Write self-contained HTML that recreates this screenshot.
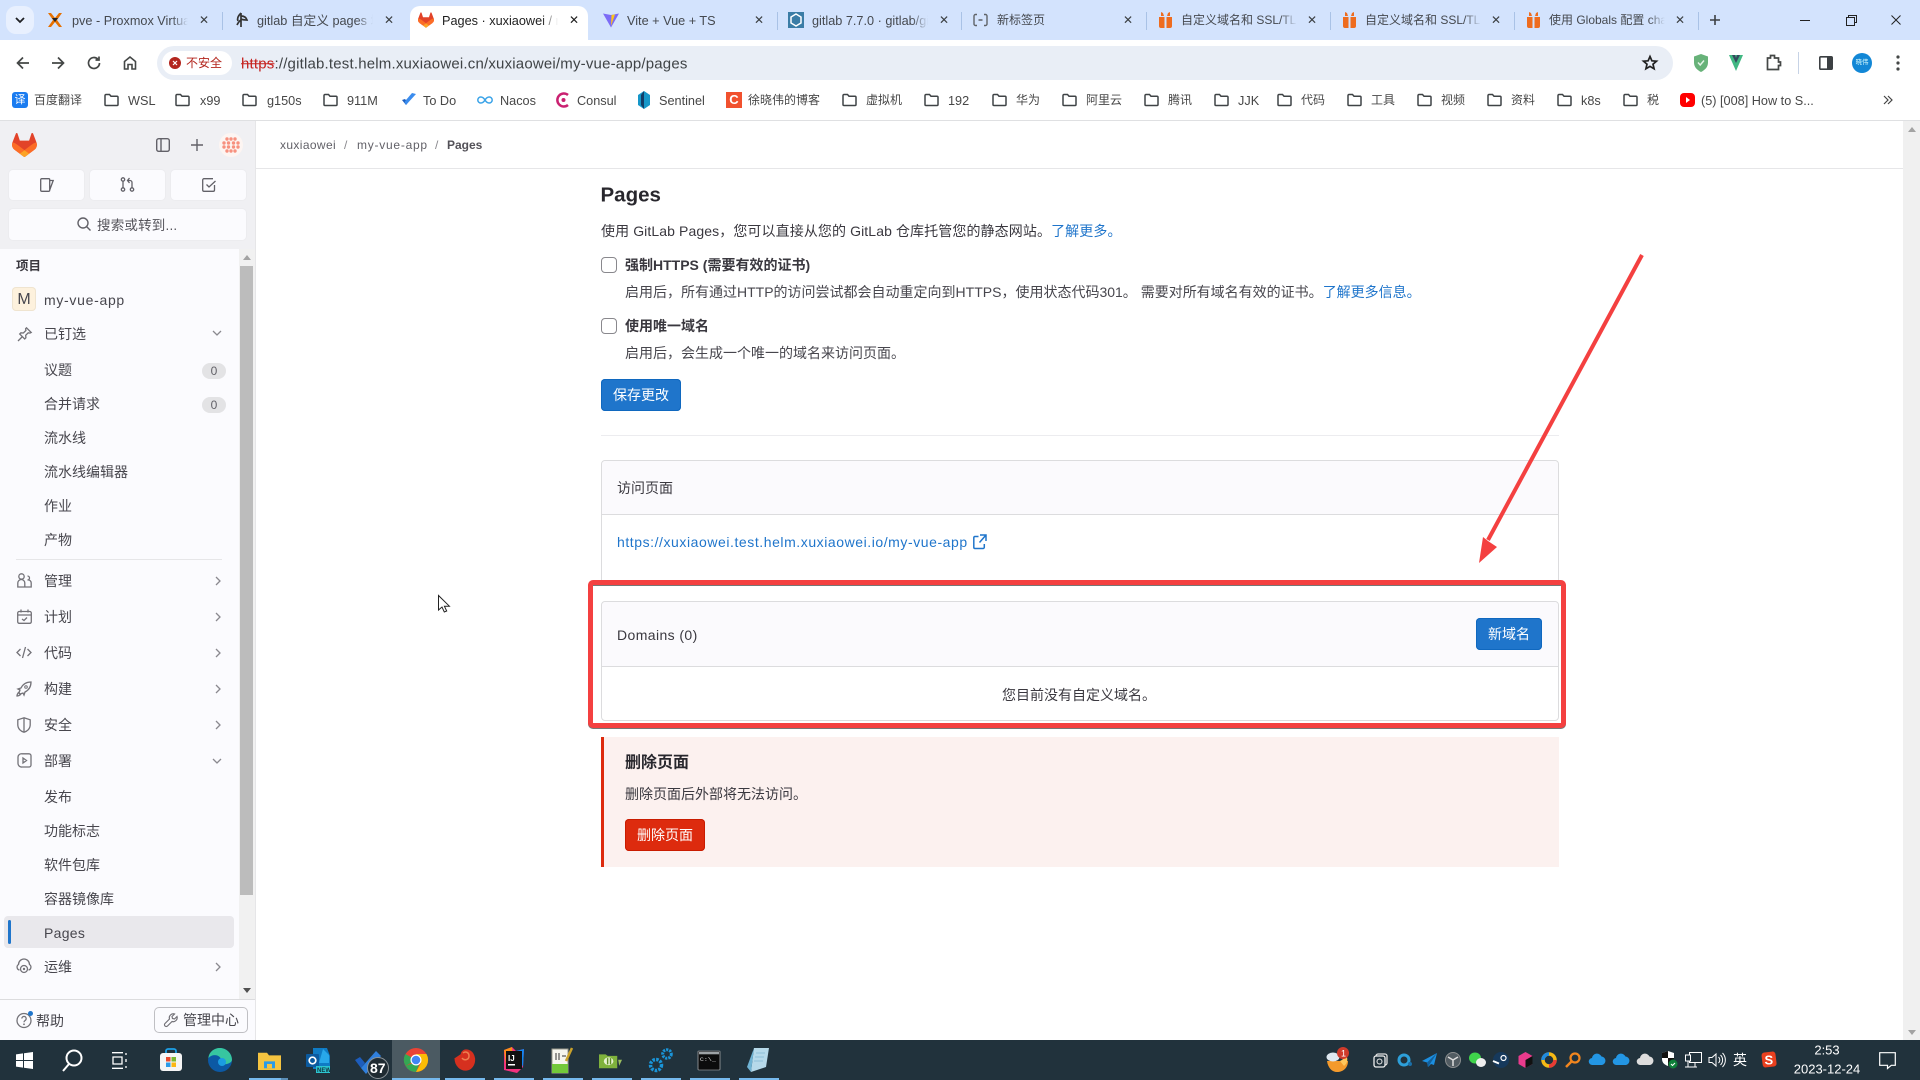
<!DOCTYPE html>
<html lang="zh"><head><meta charset="utf-8"><title>Pages · xuxiaowei</title>
<style>
*{box-sizing:border-box}
html,body{margin:0;padding:0;width:1920px;height:1080px;overflow:hidden;background:#fff;font-family:"Liberation Sans","Noto Sans CJK SC",sans-serif;color:#3a383f}
.a{position:absolute}
.t{position:absolute;white-space:nowrap;transform:translateY(-50%);line-height:1.3}
svg{position:absolute;overflow:visible}
.tab{font-size:12.7px;color:#45494f;width:116px;overflow:hidden;-webkit-mask-image:linear-gradient(to right,#000 86%,transparent);mask-image:linear-gradient(to right,#000 86%,transparent)}
.x{font-size:12px;color:#3c4043;font-family:"Liberation Sans",sans-serif}
.sep{position:absolute;top:12px;width:1px;height:18px;background:#a9c2e6}
.bm{font-size:12px;color:#474747}
.bl{font-size:12.7px;color:#474747}
.s{font-size:14px;color:#47464d}
.m{font-size:14px;color:#3a383f}
.btn{position:absolute;border-radius:4px;color:#fff;font-size:14px;text-align:center;line-height:33px}
a{color:#1f75cb;text-decoration:none}
.tb{position:absolute;left:0;top:1040px;width:1920px;height:40px;background:#21323c}
.u{position:absolute;top:1078px;height:2px;background:#76b9ed}
</style></head><body>

<!-- tab strip -->
<div class="a" style="left:0;top:0;width:1920px;height:40px;background:#d3e3fd"></div>
<div class="a" style="left:6px;top:6px;width:28px;height:28px;border-radius:10px;background:#e8f0fe"></div>
<svg style="left:14px;top:15px" width="12" height="10" viewBox="0 0 12 10"><path d="M2 3l4 4 4-4" fill="none" stroke="#202124" stroke-width="1.8"/></svg>
<div class="a" style="left:410px;top:6px;width:178px;height:36px;background:#fff;border-radius:10px 10px 0 0"></div>

<svg style="left:47px;top:12px" width="16" height="16" viewBox="0 0 16 16"><path d="M1 1h3l4 5 4-5h3l-5 7 5 7h-3l-4-5-4 5H1l5-7z" fill="#e57000"/><path d="M5 6l3 4 3-4" fill="#222"/></svg>
<span class="t tab" style="left:72px;top:21px">pve - Proxmox Virtual Environment</span><span class="t x" style="left:199px;top:21px">✕</span>
<div class="sep" style="left:222px"></div>
<svg style="left:235px;top:12px" width="14" height="16" viewBox="0 0 14 16"><path d="M6 1v14M6 1C3 4 2 7 3 9M6 4c3 0 5 1 6 4-2 0-4 0-6-1M6 8c-2 1-3 3-4 5" fill="none" stroke="#333" stroke-width="1.7"/></svg>
<span class="t tab" style="left:257px;top:21px">gitlab 自定义 pages 域名</span><span class="t x" style="left:384px;top:21px">✕</span>

<svg style="left:418px;top:12px" width="16" height="16" viewBox="0 0 25 24"><path d="m24.507 9.5-.034-.09L21.082.562a.896.896 0 0 0-1.694.091l-2.29 7.01H7.825L5.535.653a.898.898 0 0 0-1.694-.09L.451 9.411.416 9.5a6.297 6.297 0 0 0 2.09 7.278l.012.01.03.022 5.16 3.867 2.56 1.935 1.554 1.176a1.051 1.051 0 0 0 1.268 0l1.555-1.176 2.56-1.935 5.197-3.89.014-.01A6.297 6.297 0 0 0 24.507 9.5Z" fill="#E24329"/><path d="m24.507 9.5-.034-.09a11.44 11.44 0 0 0-4.56 2.051l-7.447 5.632 4.742 3.584 5.197-3.89.014-.01A6.297 6.297 0 0 0 24.507 9.5Z" fill="#FC6D26"/><path d="m7.707 20.677 2.56 1.935 1.555 1.176a1.051 1.051 0 0 0 1.268 0l1.555-1.176 2.56-1.935-4.743-3.584-4.755 3.584Z" fill="#FCA326"/><path d="M5.01 11.461a11.43 11.43 0 0 0-4.56-2.05L.416 9.5a6.297 6.297 0 0 0 2.09 7.278l.012.01.03.022 5.16 3.867 4.745-3.584-7.444-5.632Z" fill="#FC6D26"/></svg>
<span class="t tab" style="left:442px;top:21px;color:#1f1f1f">Pages · xuxiaowei / my-vue-app</span><span class="t x" style="left:569px;top:21px;color:#1f1f1f">✕</span>

<svg style="left:603px;top:12px" width="16" height="16" viewBox="0 0 16 16"><path d="M0 1.5L8 3l8-1.5L8 15.5z" fill="#7c6cf6"/><path d="M8.5 3l3.5-.6L8 14z" fill="#ffc517"/></svg>
<span class="t tab" style="left:627px;top:21px">Vite + Vue + TS</span><span class="t x" style="left:754px;top:21px">✕</span>
<div class="sep" style="left:777px"></div>
<svg style="left:788px;top:12px" width="16" height="16" viewBox="0 0 16 16"><rect width="16" height="16" fill="#3b7da6"/><path d="M8 2l5 3v6l-5 3-5-3V5z" fill="none" stroke="#fff" stroke-width="1.5"/></svg>
<span class="t tab" style="left:812px;top:21px">gitlab 7.7.0 · gitlab/gitlab</span><span class="t x" style="left:939px;top:21px">✕</span>
<div class="sep" style="left:961px"></div>
<svg style="left:973px;top:13px" width="15" height="14" viewBox="0 0 15 14"><path d="M4 1.5H2.5a1.5 1.5 0 0 0-1.5 1.5v8a1.5 1.5 0 0 0 1.5 1.5H4M11 1.5h1.5a1.5 1.5 0 0 1 1.5 1.5v8a1.5 1.5 0 0 1-1.5 1.5H11M5.5 7h4" fill="none" stroke="#5f6368" stroke-width="1.4"/></svg>
<span class="t tab" style="left:997px;top:21px;font-size:12px">新标签页</span><span class="t x" style="left:1123px;top:21px">✕</span>
<div class="sep" style="left:1146px"></div>
<svg style="left:1158px;top:12px" width="15" height="16" viewBox="0 0 15 16"><path d="M1 5h5.5v11H3a2 2 0 0 1-2-2zM8.5 5H14v9a2 2 0 0 1-2 2H8.5zM3 0l2 1 1 3H3zM12 0l-2 1-1 3h3z" fill="#ee6c1f"/></svg>
<span class="t tab" style="left:1181px;top:21px;font-size:12px">自定义域名和 SSL/TLS 证书</span><span class="t x" style="left:1307px;top:21px">✕</span>
<div class="sep" style="left:1330px"></div>
<svg style="left:1342px;top:12px" width="15" height="16" viewBox="0 0 15 16"><path d="M1 5h5.5v11H3a2 2 0 0 1-2-2zM8.5 5H14v9a2 2 0 0 1-2 2H8.5zM3 0l2 1 1 3H3zM12 0l-2 1-1 3h3z" fill="#ee6c1f"/></svg>
<span class="t tab" style="left:1365px;top:21px;font-size:12px">自定义域名和 SSL/TLS 证书</span><span class="t x" style="left:1491px;top:21px">✕</span>
<div class="sep" style="left:1514px"></div>
<svg style="left:1526px;top:12px" width="15" height="16" viewBox="0 0 15 16"><path d="M1 5h5.5v11H3a2 2 0 0 1-2-2zM8.5 5H14v9a2 2 0 0 1-2 2H8.5zM3 0l2 1 1 3H3zM12 0l-2 1-1 3h3z" fill="#ee6c1f"/></svg>
<span class="t tab" style="left:1549px;top:21px;font-size:12px">使用 Globals 配置 chart</span><span class="t x" style="left:1675px;top:21px">✕</span>
<div class="sep" style="left:1698px"></div>
<svg style="left:1709px;top:14px" width="12" height="12" viewBox="0 0 12 12"><path d="M6 1v10M1 6h10" stroke="#3c4043" stroke-width="1.6"/></svg>
<div class="a" style="left:1800px;top:20px;width:10px;height:1px;background:#222"></div>
<svg style="left:1846px;top:15px" width="11" height="11" viewBox="0 0 11 11"><path d="M2.5 2.5V.5h8v7h-2M.5 2.5h8v8h-8z" fill="none" stroke="#222"/></svg>
<svg style="left:1891px;top:15px" width="10" height="10" viewBox="0 0 10 10"><path d="M.5.5l9 9M9.5.5l-9 9" stroke="#222"/></svg>

<!-- toolbar -->
<div class="a" style="left:0;top:40px;width:1920px;height:41px;background:#fff;"></div>
<svg style="left:15px;top:55px" width="16" height="16" viewBox="0 0 16 16"><path d="M14 8H2.5M8 2.5L2.5 8 8 13.5" fill="none" stroke="#444746" stroke-width="1.7"/></svg>
<svg style="left:50px;top:55px" width="16" height="16" viewBox="0 0 16 16"><path d="M2 8h11.5M8 2.5L13.5 8 8 13.5" fill="none" stroke="#444746" stroke-width="1.7"/></svg>
<svg style="left:86px;top:55px" width="16" height="16" viewBox="0 0 16 16"><path d="M13.5 8A5.5 5.5 0 1 1 11.8 4M13 1.5V5H9.5" fill="none" stroke="#444746" stroke-width="1.7"/></svg>
<svg style="left:122px;top:55px" width="16" height="16" viewBox="0 0 16 16"><path d="M2.5 14V6.5L8 2l5.5 4.5V14H10V9.5H6V14z" fill="none" stroke="#444746" stroke-width="1.6"/></svg>
<div class="a" style="left:157px;top:46px;width:1516px;height:34px;border-radius:17px;background:#e9eef6"></div>
<div class="a" style="left:162px;top:51px;width:70px;height:24px;border-radius:12px;background:#fff"></div>
<svg style="left:169px;top:57px" width="12" height="12" viewBox="0 0 12 12"><circle cx="6" cy="6" r="6" fill="#b3261e"/><path d="M4 4l4 4M8 4l-4 4" stroke="#fff" stroke-width="1.2"/></svg>
<span class="t" style="left:186px;top:64px;font-size:12px;color:#b3261e">不安全</span>
<span class="t" style="left:241px;top:64px;font-size:15px;color:#1f1f1f;letter-spacing:.19px"><span style="color:#c5221f;text-decoration:line-through">https</span><span style="color:#3f4346">://gitlab.test.helm.xuxiaowei.cn/xuxiaowei/my-vue-app/pages</span></span>
<svg style="left:1642px;top:55px" width="16" height="16" viewBox="0 0 16 16"><path d="M8 1.5l1.900 4.300 4.600.4-3.500 3 1.100 4.600L8 11.400 3.900 13.800 5 9.200l-3.500-3 4.600-.4z" fill="none" stroke="#222" stroke-width="1.7"/></svg>
<svg style="left:1693px;top:54px" width="16" height="18" viewBox="0 0 16 18"><path d="M8 0l7 2.5v6C15 13 12 16 8 18 4 16 1 13 1 8.5v-6z" fill="#67b279"/><path d="M5 8.5l2.200 2.500L11 6.500" fill="none" stroke="#e6f5e9" stroke-width="1.4"/></svg>
<svg style="left:1729px;top:55px" width="14" height="16" viewBox="0 0 14 16"><path d="M0 0h14L7 16z" fill="#41b883"/><path d="M3 0h3l1 3 1-3h3L7 8z" fill="#35495e"/></svg>
<svg style="left:1766px;top:54px" width="15" height="17" viewBox="0 0 15 17"><path d="M1.5 4h3V1.500h4V4h4v4h2v3.500h-2V15.500h-11z" fill="none" stroke="#444746" stroke-width="1.7"/></svg>
<div class="a" style="left:1798px;top:52px;width:1px;height:22px;background:#c7d3e6"></div>
<svg style="left:1819px;top:56px" width="14" height="14" viewBox="0 0 14 14"><rect x=".8" y=".8" width="12.4" height="12.4" rx="1" fill="#fff" stroke="#3c4043" stroke-width="1.6"/><rect x="8" y="1" width="5" height="12" fill="#3c4043"/></svg>
<div class="a" style="left:1852px;top:53px;width:20px;height:20px;border-radius:50%;background:#1287d6;color:#dff;font-size:6.5px;line-height:20px;text-align:center">晓伟</div>
<svg style="left:1896px;top:55px" width="4" height="16" viewBox="0 0 4 16"><circle cx="2" cy="2" r="1.6" fill="#444746"/><circle cx="2" cy="8" r="1.6" fill="#444746"/><circle cx="2" cy="14" r="1.6" fill="#444746"/></svg>

<!-- bookmarks -->
<svg style="left:0;top:0;width:0;height:0"><defs><g id="f"><path d="M1 3.5a1 1 0 0 1 1-1h3.500l1.500 1.700h6a1 1 0 0 1 1 1V12.500a1 1 0 0 1-1 1H2a1 1 0 0 1-1-1z" fill="none" stroke="#3f4346" stroke-width="1.5"/></g></defs></svg>
<div class="a" style="left:12px;top:92px;width:16px;height:16px;border-radius:3px;background:#1b7cf0;color:#fff;font-size:11px;line-height:16px;text-align:center">译</div>
<span class="t bm" style="left:34px;top:101px">百度翻译</span>
<svg style="left:104px;top:92px" width="16" height="16"><use href="#f"/></svg><span class="t bl" style="left:128px;top:101px">WSL</span>
<svg style="left:175px;top:92px" width="16" height="16"><use href="#f"/></svg><span class="t bl" style="left:200px;top:101px">x99</span>
<svg style="left:242px;top:92px" width="16" height="16"><use href="#f"/></svg><span class="t bl" style="left:267px;top:101px">g150s</span>
<svg style="left:323px;top:92px" width="16" height="16"><use href="#f"/></svg><span class="t bl" style="left:347px;top:101px">911M</span>
<svg style="left:401px;top:92px" width="16" height="16" viewBox="0 0 16 16"><path d="M1 8l4 5 2-2.500L4 7z" fill="#1d5dbd"/><path d="M5 13L15 2l-4-1-6 7-1.500 2z" fill="#3a8cee"/></svg><span class="t bl" style="left:423px;top:101px">To Do</span>
<svg style="left:477px;top:94px" width="16" height="12" viewBox="0 0 16 12"><path d="M8 6C6.500 3.500 5 3 3.800 3a3 3 0 0 0 0 6C5 9 6.500 8.500 8 6c1.500-2.500 3-3 4.200-3a3 3 0 0 1 0 6C11 9 9.500 8.500 8 6z" fill="none" stroke="#3aa3e8" stroke-width="1.5"/></svg><span class="t bl" style="left:500px;top:101px">Nacos</span>
<svg style="left:556px;top:92px" width="15" height="16" viewBox="0 0 15 16"><path d="M12 3a6.500 6.500 0 1 0 0 10" fill="none" stroke="#ca2171" stroke-width="2.5"/><circle cx="7.5" cy="8" r="2" fill="#ca2171"/></svg><span class="t bl" style="left:577px;top:101px">Consul</span>
<svg style="left:637px;top:91px" width="14" height="18" viewBox="0 0 14 18"><path d="M7 0l6 4v10l-6 4-6-4V4z" fill="#1597c9"/><path d="M7 0v18L4 14V4z" fill="#103d68"/></svg><span class="t bl" style="left:659px;top:101px">Sentinel</span>
<div class="a" style="left:726px;top:92px;width:16px;height:16px;background:#f1512e;color:#fff;font-size:13px;line-height:16px;text-align:center;font-weight:bold">C</div><span class="t bm" style="left:748px;top:101px">徐晓伟的博客</span>
<svg style="left:842px;top:92px" width="16" height="16"><use href="#f"/></svg><span class="t bm" style="left:866px;top:101px">虚拟机</span>
<svg style="left:924px;top:92px" width="16" height="16"><use href="#f"/></svg><span class="t bl" style="left:948px;top:101px">192</span>
<svg style="left:992px;top:92px" width="16" height="16"><use href="#f"/></svg><span class="t bm" style="left:1016px;top:101px">华为</span>
<svg style="left:1062px;top:92px" width="16" height="16"><use href="#f"/></svg><span class="t bm" style="left:1086px;top:101px">阿里云</span>
<svg style="left:1144px;top:92px" width="16" height="16"><use href="#f"/></svg><span class="t bm" style="left:1168px;top:101px">腾讯</span>
<svg style="left:1214px;top:92px" width="16" height="16"><use href="#f"/></svg><span class="t bl" style="left:1238px;top:101px">JJK</span>
<svg style="left:1277px;top:92px" width="16" height="16"><use href="#f"/></svg><span class="t bm" style="left:1301px;top:101px">代码</span>
<svg style="left:1347px;top:92px" width="16" height="16"><use href="#f"/></svg><span class="t bm" style="left:1371px;top:101px">工具</span>
<svg style="left:1417px;top:92px" width="16" height="16"><use href="#f"/></svg><span class="t bm" style="left:1441px;top:101px">视频</span>
<svg style="left:1487px;top:92px" width="16" height="16"><use href="#f"/></svg><span class="t bm" style="left:1511px;top:101px">资料</span>
<svg style="left:1557px;top:92px" width="16" height="16"><use href="#f"/></svg><span class="t bl" style="left:1581px;top:101px">k8s</span>
<svg style="left:1623px;top:92px" width="16" height="16"><use href="#f"/></svg><span class="t bm" style="left:1647px;top:101px">税</span>
<svg style="left:1680px;top:93px" width="15" height="14" viewBox="0 0 15 14"><rect width="15" height="14" rx="4" fill="#f00"/><path d="M6 4l4 3-4 3z" fill="#fff"/></svg><span class="t bl" style="left:1701px;top:101px">(5) [008] How to S...</span>
<svg style="left:1883px;top:95px" width="10" height="10" viewBox="0 0 10 10"><path d="M1 1l4 4-4 4M5 1l4 4-4 4" fill="none" stroke="#444" stroke-width="1.2"/></svg>
<div class="a" style="left:0;top:120px;width:1920px;height:1px;background:#dfe0e2"></div>

<!-- sidebar -->
<div class="a" style="left:0;top:121px;width:255px;height:128px;background:#f0f0f3"></div>
<div class="a" style="left:0;top:249px;width:239px;height:750px;background:#fbfbfe"></div>
<div class="a" style="left:239px;top:249px;width:16px;height:750px;background:#f1f1f1"></div>
<div class="a" style="left:240px;top:266px;width:13px;height:629px;background:#bcbcbc"></div>
<svg style="left:242px;top:255px" width="10" height="6" viewBox="0 0 10 6"><path d="M5 0l4 5H1z" fill="#a3a3a3"/></svg>
<svg style="left:242px;top:987px" width="10" height="6" viewBox="0 0 10 6"><path d="M1 1h8L5 6z" fill="#505050"/></svg>
<div class="a" style="left:255px;top:121px;width:1px;height:919px;background:#e6e6e8"></div>
<div class="a" style="left:0;top:999px;width:255px;height:41px;background:#fbfbfe;border-top:1px solid #dcdcde"></div>

<svg style="left:12px;top:133px" width="25" height="24" viewBox="0 0 25 24"><path d="m24.507 9.5-.034-.09L21.082.562a.896.896 0 0 0-1.694.091l-2.29 7.01H7.825L5.535.653a.898.898 0 0 0-1.694-.09L.451 9.411.416 9.5a6.297 6.297 0 0 0 2.09 7.278l.012.01.03.022 5.16 3.867 2.56 1.935 1.554 1.176a1.051 1.051 0 0 0 1.268 0l1.555-1.176 2.56-1.935 5.197-3.89.014-.01A6.297 6.297 0 0 0 24.507 9.5Z" fill="#E24329"/><path d="m24.507 9.5-.034-.09a11.44 11.44 0 0 0-4.56 2.051l-7.447 5.632 4.742 3.584 5.197-3.89.014-.01A6.297 6.297 0 0 0 24.507 9.5Z" fill="#FC6D26"/><path d="m7.707 20.677 2.56 1.935 1.555 1.176a1.051 1.051 0 0 0 1.268 0l1.555-1.176 2.56-1.935-4.743-3.584-4.755 3.584Z" fill="#FCA326"/><path d="M5.01 11.461a11.43 11.43 0 0 0-4.56-2.05L.416 9.5a6.297 6.297 0 0 0 2.09 7.278l.012.01.03.022 5.16 3.867 4.745-3.584-7.444-5.632Z" fill="#FC6D26"/></svg>
<svg style="left:156px;top:138px" width="14" height="14" viewBox="0 0 14 14"><rect x=".7" y=".7" width="12.6" height="12.6" rx="2" fill="none" stroke="#626168" stroke-width="1.4"/><path d="M5 1v12" stroke="#626168" stroke-width="1.4"/></svg>
<svg style="left:191px;top:139px" width="12" height="12" viewBox="0 0 12 12"><path d="M6 0v12M0 6h12" stroke="#626168" stroke-width="1.4"/></svg>
<svg style="left:219px;top:133px" width="24" height="24" viewBox="0 0 24 24"><circle cx="12" cy="12" r="12" fill="#fdf5f2"/><g fill="#f7917f"><circle cx="8" cy="6" r="1.7"/><circle cx="12" cy="6" r="1.7"/><circle cx="16" cy="6" r="1.7"/><circle cx="5" cy="10" r="1.7"/><circle cx="9.5" cy="10" r="1.7"/><circle cx="14.5" cy="10" r="1.7"/><circle cx="19" cy="10" r="1.7"/><circle cx="5" cy="14" r="1.7"/><circle cx="9.5" cy="14" r="1.7"/><circle cx="14.5" cy="14" r="1.7"/><circle cx="19" cy="14" r="1.7"/><circle cx="8" cy="18" r="1.7"/><circle cx="12" cy="18" r="1.7"/><circle cx="16" cy="18" r="1.7"/></g></svg>
<div class="a" style="left:9px;top:170px;width:75px;height:30px;background:#fbfbfe;border-radius:4px;box-shadow:0 0 0 1px #ececef"></div>
<div class="a" style="left:90px;top:170px;width:75px;height:30px;background:#fbfbfe;border-radius:4px;box-shadow:0 0 0 1px #ececef"></div>
<div class="a" style="left:171px;top:170px;width:75px;height:30px;background:#fbfbfe;border-radius:4px;box-shadow:0 0 0 1px #ececef"></div>
<svg style="left:40px;top:178px" width="14" height="14" viewBox="0 0 14 14"><path d="M1.700.7h7a1 1 0 0 1 1 1v10.600a1 1 0 0 1-1 1h-7a1 1 0 0 1-1-1V1.700a1 1 0 0 1 1-1zM9.700 2.500h3.500L9.700 12" fill="none" stroke="#626168" stroke-width="1.3"/></svg>
<svg style="left:120px;top:177px" width="15" height="15" viewBox="0 0 15 15"><circle cx="3" cy="2.5" r="1.7" fill="none" stroke="#626168" stroke-width="1.3"/><circle cx="3" cy="12.5" r="1.7" fill="none" stroke="#626168" stroke-width="1.3"/><circle cx="12" cy="12.5" r="1.7" fill="none" stroke="#626168" stroke-width="1.3"/><path d="M3 4.500v6M12 10.500V5.500a2 2 0 0 0-2-2H8M9.500 1L7.500 3.500 9.500 6" fill="none" stroke="#626168" stroke-width="1.3"/></svg>
<svg style="left:202px;top:178px" width="15" height="14" viewBox="0 0 15 14"><path d="M12.500 7v5a1.300 1.300 0 0 1-1.300 1.300H2A1.300 1.300 0 0 1 .7 12V2A1.300 1.300 0 0 1 2 .7h9M4.500 6.500l2.500 2.500 6.500-6" fill="none" stroke="#626168" stroke-width="1.3"/></svg>
<div class="a" style="left:9px;top:209px;width:237px;height:31px;background:#fbfbfe;border-radius:4px;box-shadow:0 0 0 1px #ececef"></div>
<svg style="left:77px;top:217px" width="14" height="14" viewBox="0 0 14 14"><circle cx="6" cy="6" r="5" fill="none" stroke="#626168" stroke-width="1.4"/><path d="M9.500 9.500l4 4" stroke="#626168" stroke-width="1.4"/></svg>
<span class="t" style="left:97px;top:226px;font-size:13.5px;color:#55545b;letter-spacing:.2px">搜索或转到...</span>

<span class="t" style="left:16px;top:266px;font-size:12.5px;font-weight:bold;color:#3a383f">项目</span>
<div class="a" style="left:12px;top:287px;width:24px;height:24px;border-radius:4px;background:#fdf1dd;box-shadow:inset 0 0 0 1px #efe4d0;color:#47464d;font-size:16px;line-height:25px;text-align:center">M</div>
<span class="t s" style="left:44px;top:300px;letter-spacing:.7px">my-vue-app</span>
<svg style="left:17px;top:327px" width="15" height="15" viewBox="0 0 15 15"><path d="M9.500.8l4.700 4.700-1.200.6-1.800-.3-2.500 2.500.2 2.500-1.200 1.200-5-5L3.900 5.800l2.500.2L8.900 3.500 8.600 1.700zM5 10l-4 4" fill="none" stroke="#737278" stroke-width="1.3"/></svg>
<span class="t s" style="left:44px;top:334px">已钉选</span>
<span class="t s" style="left:44px;top:370px">议题</span>
<div class="a" style="left:202px;top:363px;width:24px;height:16px;border-radius:8px;background:#e3e3e5;color:#626168;font-size:12px;line-height:16px;text-align:center">0</div>
<span class="t s" style="left:44px;top:404px">合并请求</span>
<div class="a" style="left:202px;top:397px;width:24px;height:16px;border-radius:8px;background:#e3e3e5;color:#626168;font-size:12px;line-height:16px;text-align:center">0</div>
<span class="t s" style="left:44px;top:438px">流水线</span>
<span class="t s" style="left:44px;top:472px">流水线编辑器</span>
<span class="t s" style="left:44px;top:506px">作业</span>
<span class="t s" style="left:44px;top:540px">产物</span>
<div class="a" style="left:16px;top:559px;width:206px;height:1px;background:#e6e6e8"></div>
<svg style="left:17px;top:573px" width="15" height="15" viewBox="0 0 15 15"><circle cx="4.500" cy="3.500" r="2.700" fill="none" stroke="#737278" stroke-width="1.3"/><path d="M.8 14v-4a3.500 3.500 0 0 1 7 0v4zM10.500 7a2 2 0 1 0 0-4M10.500 7a3 3 0 0 1 3.700 3v4h-6" fill="none" stroke="#737278" stroke-width="1.3"/></svg>
<span class="t s" style="left:44px;top:581px">管理</span>
<svg style="left:17px;top:609px" width="15" height="15" viewBox="0 0 15 15"><rect x=".7" y="2.5" width="13.6" height="11.8" rx="1.5" fill="none" stroke="#737278" stroke-width="1.3"/><path d="M1 6h13M4 .5v3M11 .5v3M5 10l2 1.500L10 8.500" fill="none" stroke="#737278" stroke-width="1.3"/></svg>
<span class="t s" style="left:44px;top:617px">计划</span>
<svg style="left:16px;top:645px" width="16" height="15" viewBox="0 0 16 15"><path d="M4.500 4L1 7.500 4.500 11M11.500 4L15 7.500 11.500 11M9.500 2L6.500 13" fill="none" stroke="#737278" stroke-width="1.3"/></svg>
<span class="t s" style="left:44px;top:653px">代码</span>
<svg style="left:16px;top:681px" width="16" height="16" viewBox="0 0 16 16"><path d="M15 1c-5 0-8 2-10 6l-3 1 2 1-1 3 1 1 3-1 1 2 1-3c4-2 6-5 6-10zM3 11c-1 1-2 2-2 4 2 0 3-1 4-2" fill="none" stroke="#737278" stroke-width="1.3"/><circle cx="10" cy="6" r="1.3" fill="none" stroke="#737278"/></svg>
<span class="t s" style="left:44px;top:689px">构建</span>
<svg style="left:17px;top:717px" width="14" height="16" viewBox="0 0 14 16"><path d="M7 .8l6.200 2v5c0 4-3 6.500-6.200 7.400C3.800 14.300.8 11.800.8 7.800v-5zM7 .8v14.400" fill="none" stroke="#737278" stroke-width="1.3"/></svg>
<span class="t s" style="left:44px;top:725px">安全</span>
<svg style="left:17px;top:753px" width="15" height="15" viewBox="0 0 15 15"><path d="M5 .8h7a2 2 0 0 1 2 2V12a2 2 0 0 1-2 2H5a3.500 3.500 0 0 1-4-3.500V4A3.500 3.500 0 0 1 5 .8zM6 5l3.500 2.500L6 10z" fill="none" stroke="#737278" stroke-width="1.3"/></svg>
<span class="t s" style="left:44px;top:761px">部署</span>
<span class="t s" style="left:44px;top:797px">发布</span>
<span class="t s" style="left:44px;top:831px">功能标志</span>
<span class="t s" style="left:44px;top:865px">软件包库</span>
<span class="t s" style="left:44px;top:899px">容器镜像库</span>
<div class="a" style="left:4px;top:916px;width:230px;height:32px;border-radius:4px;background:#e9e8ec"></div>
<div class="a" style="left:8px;top:920px;width:3px;height:24px;border-radius:2px;background:#1f75cb"></div>
<span class="t s" style="left:44px;top:933px;letter-spacing:.3px">Pages</span>
<svg style="left:16px;top:959px" width="16" height="15" viewBox="0 0 16 15"><path d="M3.500 11A3 3 0 0 1 2.500 5.500 5.500 5.500 0 0 1 13.500 5.500 3 3 0 0 1 12.500 11" fill="none" stroke="#737278" stroke-width="1.3"/><circle cx="8" cy="10" r="3.500" fill="none" stroke="#737278" stroke-width="1.3"/><circle cx="8" cy="10" r="1.2" fill="#737278"/></svg>
<span class="t s" style="left:44px;top:967px">运维</span>
<svg style="left:212px;top:329px" width="10" height="8" viewBox="0 0 10 8"><path d="M1 2l4 4 4-4" fill="none" stroke="#8a898f" stroke-width="1.3"/></svg>
<svg style="left:212px;top:757px" width="10" height="8" viewBox="0 0 10 8"><path d="M1 2l4 4 4-4" fill="none" stroke="#8a898f" stroke-width="1.3"/></svg>
<svg style="left:214px;top:576px" width="8" height="10" viewBox="0 0 8 10"><path d="M2 1l4 4-4 4" fill="none" stroke="#8a898f" stroke-width="1.3"/></svg>
<svg style="left:214px;top:612px" width="8" height="10" viewBox="0 0 8 10"><path d="M2 1l4 4-4 4" fill="none" stroke="#8a898f" stroke-width="1.3"/></svg>
<svg style="left:214px;top:648px" width="8" height="10" viewBox="0 0 8 10"><path d="M2 1l4 4-4 4" fill="none" stroke="#8a898f" stroke-width="1.3"/></svg>
<svg style="left:214px;top:684px" width="8" height="10" viewBox="0 0 8 10"><path d="M2 1l4 4-4 4" fill="none" stroke="#8a898f" stroke-width="1.3"/></svg>
<svg style="left:214px;top:720px" width="8" height="10" viewBox="0 0 8 10"><path d="M2 1l4 4-4 4" fill="none" stroke="#8a898f" stroke-width="1.3"/></svg>
<svg style="left:214px;top:962px" width="8" height="10" viewBox="0 0 8 10"><path d="M2 1l4 4-4 4" fill="none" stroke="#8a898f" stroke-width="1.3"/></svg>
<svg style="left:16px;top:1012px" width="16" height="16" viewBox="0 0 16 16"><circle cx="8" cy="8.5" r="7" fill="none" stroke="#737278" stroke-width="1.3"/><path d="M5.800 6.500a2.200 2.200 0 1 1 3.300 2c-.8.500-1.100 1-1.100 1.800" fill="none" stroke="#737278" stroke-width="1.3"/><circle cx="8" cy="12.3" r=".9" fill="#737278"/></svg>
<div class="a" style="left:28px;top:1011px;width:5px;height:5px;border-radius:50%;background:#1f75cb"></div>
<span class="t s" style="left:36px;top:1021px;font-size:14px">帮助</span>
<div class="a" style="left:155px;top:1008px;width:92px;height:24px;border-radius:4px;background:#fbfbfe;box-shadow:0 0 0 1px #bfbfc3"></div>
<svg style="left:164px;top:1013px" width="14" height="14" viewBox="0 0 14 14"><path d="M13 3.500l-2.500 2.500-2-.5-.5-2L10.500 1a4 4 0 0 0-5 5L1 10.500a1.700 1.700 0 0 0 2.500 2.500L8 8.500a4 4 0 0 0 5-5z" fill="none" stroke="#737278" stroke-width="1.2"/></svg>
<span class="t s" style="left:183px;top:1020px">管理中心</span>

<!-- main -->
<div class="a" style="left:256px;top:168px;width:1647px;height:1px;background:#e6e6e8"></div>
<div class="a" style="left:1903px;top:121px;width:17px;height:919px;background:#f0f0f0"></div>
<svg style="left:1908px;top:127px" width="8" height="6" viewBox="0 0 8 6"><path d="M4 0l4 5H0z" fill="#a3a3a3"/></svg>
<svg style="left:1908px;top:1029px" width="8" height="6" viewBox="0 0 8 6"><path d="M4 0l4 5H0z" fill="#a3a3a3" transform="rotate(180 4 3)"/></svg>
<span class="t" style="left:280px;top:145.5px;font-size:12px;color:#626168;letter-spacing:.37px">xuxiaowei</span>
<span class="t" style="left:344px;top:145.5px;font-size:12px;color:#89888d">/</span>
<span class="t" style="left:357px;top:145.5px;font-size:12px;color:#626168;letter-spacing:.75px">my-vue-app</span>
<span class="t" style="left:435px;top:145.5px;font-size:12px;color:#89888d">/</span>
<span class="t" style="left:447px;top:145.5px;font-size:12px;font-weight:bold;color:#535158">Pages</span>

<span class="t" style="left:600.5px;top:195.5px;font-size:20.5px;font-weight:bold;color:#28272d">Pages</span>
<span class="t m" style="left:601px;top:231px;letter-spacing:.1px">使用 GitLab Pages，您可以直接从您的 GitLab 仓库托管您的静态网站。<a href="#">了解更多。</a></span>
<div class="a" style="left:601px;top:257px;width:16px;height:16px;border-radius:4px;border:1px solid #89888d;background:#fff"></div>
<span class="t m" style="left:625px;top:265px;font-weight:bold;font-size:14px">强制HTTPS (需要有效的证书)</span>
<span class="t m" style="left:625px;top:292px;color:#47464d">启用后，所有通过HTTP的访问尝试都会自动重定向到HTTPS，使用状态代码301。 需要对所有域名有效的证书。<a href="#">了解更多信息。</a></span>
<div class="a" style="left:601px;top:318px;width:16px;height:16px;border-radius:4px;border:1px solid #89888d;background:#fff"></div>
<span class="t m" style="left:625px;top:326px;font-weight:bold">使用唯一域名</span>
<span class="t m" style="left:625px;top:353px;color:#47464d">启用后，会生成一个唯一的域名来访问页面。</span>
<div class="btn" style="left:601px;top:379px;width:80px;height:32px;background:#1f75cb;box-shadow:inset 0 0 0 1px #1068bf">保存更改</div>
<div class="a" style="left:601px;top:435px;width:958px;height:1px;background:#ececef"></div>

<div class="a" style="left:601px;top:460px;width:958px;height:140px;border:1px solid #dcdcde;border-radius:4px 4px 0 0;background:#fff"></div>
<div class="a" style="left:602px;top:461px;width:956px;height:54px;background:#fbfafd;border-bottom:1px solid #dcdcde;border-radius:4px 4px 0 0"></div>
<span class="t m" style="left:617px;top:488px">访问页面</span>
<span class="t" style="left:617px;top:542px;font-size:14px;color:#1f75cb;letter-spacing:.56px">https://xuxiaowei.test.helm.xuxiaowei.io/my-vue-app</span>
<svg style="left:973px;top:534px" width="14" height="15" viewBox="0 0 14 15"><path d="M5.500 2.500H2A1.300 1.300 0 0 0 .8 3.800v9.400A1.300 1.300 0 0 0 2 14.500h8a1.300 1.300 0 0 0 1.300-1.300V10M7 1h6v6M13 1L6.500 8.500" fill="none" stroke="#1f75cb" stroke-width="1.5"/></svg>

<!-- annotation box -->
<div class="a" style="left:588px;top:580px;width:978px;height:148px;background:#fff;border:5px solid #f44040;border-radius:5px;box-shadow:0 1px 0 #777,inset 0 1px 0 #777"></div>
<div class="a" style="left:601px;top:601px;width:958px;height:120px;border:1px solid #dcdcde;border-radius:4px;background:#fff"></div>
<div class="a" style="left:602px;top:602px;width:956px;height:65px;background:#fbfafd;border-bottom:1px solid #dcdcde;border-radius:4px 4px 0 0"></div>
<span class="t m" style="left:617px;top:635px;letter-spacing:.4px">Domains (0)</span>
<div class="btn" style="left:1476px;top:618px;width:66px;height:32px;background:#1f75cb;box-shadow:inset 0 0 0 1px #1068bf">新域名</div>
<span class="t m" style="left:1002px;top:695px">您目前没有自定义域名。</span>

<div class="a" style="left:601px;top:737px;width:958px;height:130px;background:#fcf1ef;border-left:3px solid #dd2b0e"></div>
<span class="t" style="left:625px;top:764px;font-size:16px;font-weight:bold;color:#28272d">删除页面</span>
<span class="t m" style="left:625px;top:794px">删除页面后外部将无法访问。</span>
<div class="btn" style="left:625px;top:819px;width:80px;height:32px;background:#dd2b0e;box-shadow:inset 0 0 0 1px #c91c00">删除页面</div>

<!-- arrow -->
<svg style="left:0;top:0" width="1920" height="1080"><path d="M1642 255L1488 540" stroke="#f44040" stroke-width="4" fill="none"/><path d="M1479 563L1483 537 1488 541 1497 547z" fill="#f44040"/></svg>
<!-- cursor -->
<svg style="left:438px;top:595px" width="14" height="20" viewBox="0 0 14 20"><path d="M.5.5V15l3.500-3 2.300 5 2.400-1-2.300-4.800h5z" fill="#fff" stroke="#222" stroke-width="1"/></svg>

<!-- taskbar -->
<div class="tb"></div>
<div class="a" style="left:392px;top:1040px;width:48px;height:40px;background:#4b5a62"></div>
<svg style="left:16px;top:1052px" width="17" height="17" viewBox="0 0 17 17"><path d="M0 2.400L7 1.400V8H0zM8 1.300L17 0V8H8zM0 9h7v6.600L0 14.600zM8 9h9v8L8 15.700z" fill="#fff"/></svg>
<svg style="left:61px;top:1048px" width="22" height="24" viewBox="0 0 22 24"><circle cx="13" cy="10" r="7.5" fill="none" stroke="#fff" stroke-width="2"/><path d="M8 16L2 23" stroke="#fff" stroke-width="2"/></svg>
<svg style="left:112px;top:1052px" width="17" height="17" viewBox="0 0 17 17"><path d="M0 .7h11M0 16.300h11M1 5h9v7H1zM14 1v2M14 7v3M14 14v2" fill="none" stroke="#fff" stroke-width="1.3"/></svg>
<svg style="left:159px;top:1048px" width="24" height="24" viewBox="0 0 24 24"><path d="M7 6V3a2 2 0 0 1 2-2h6a2 2 0 0 1 2 2v3" fill="none" stroke="#1da1e8" stroke-width="1.8"/><rect x="1" y="5" width="22" height="18" rx="3" fill="#f5f5f5"/><rect x="7" y="9" width="4.5" height="4.5" fill="#e8492d"/><rect x="12.5" y="9" width="4.5" height="4.5" fill="#7cb82f"/><rect x="7" y="14.5" width="4.5" height="4.5" fill="#2a9be8"/><rect x="12.5" y="14.5" width="4.5" height="4.5" fill="#fcb714"/></svg>
<svg style="left:208px;top:1048px" width="24" height="24" viewBox="0 0 24 24"><circle cx="12" cy="12" r="12" fill="#0c59a4"/><path d="M24 12C24 5 18 0 12 0 6 0 1 4 .5 10c3-3.500 9-4 12 0 2 2.500.5 5-1 6 5 1.500 12-.5 12.500-4z" fill="#37c6a0"/><circle cx="14" cy="14" r="4" fill="#1b9de2"/></svg>
<svg style="left:258px;top:1051px" width="23" height="19" viewBox="0 0 23 22" preserveAspectRatio="none"><path d="M0 2h9l2 3h12v17H0z" fill="#f5c440"/><rect x="6" y="12" width="11" height="8" fill="#2a9be8"/><rect x="9" y="15" width="5" height="5" fill="#f5c440"/></svg>
<svg style="left:305px;top:1047px" width="25" height="26" viewBox="0 0 25 26"><path d="M8 1h14l3 8v13H8z" fill="#0f7bc4"/><path d="M18 2l6 6v8H14z" fill="#28a8ea"/><rect x="1" y="7" width="13" height="13" rx="1" fill="#0b5a9f"/><circle cx="7.5" cy="13.5" r="3.3" fill="none" stroke="#fff" stroke-width="1.7"/><rect x="11" y="19" width="14" height="7" fill="#2cc6d1"/><text x="12" y="25" font-size="6" font-weight="bold" fill="#12333c" font-family="Liberation Sans">NEW</text></svg>
<svg style="left:354px;top:1050px" width="37" height="30" viewBox="0 0 37 30"><path d="M1 10l6 8 4-5-5-6z" fill="#1d5dbd"/><path d="M7 18L22 1l5 5-15 18z" fill="#2f7fdd"/><circle cx="24" cy="18" r="10.5" fill="#1f2b32" stroke="#8c9499" stroke-width="1"/><text x="16" y="23" font-size="14" font-weight="bold" fill="#fff" font-family="Liberation Sans">87</text></svg>
<svg style="left:404px;top:1048px" width="24" height="24" viewBox="0 0 24 24"><circle cx="12" cy="12" r="12" fill="#ea4335"/><path d="M12 12L1.600 18a12 12 0 0 1-.2-12z" fill="#34a853"/><path d="M1.600 18A12 12 0 0 0 12 24l5-12z" fill="#34a853"/><path d="M12 6h10.500A12 12 0 0 1 12 24l5-9z" fill="#fbbc05"/><circle cx="12" cy="12" r="5.5" fill="#fff"/><circle cx="12" cy="12" r="4.3" fill="#4285f4"/></svg>
<svg style="left:453px;top:1047px" width="24" height="26" viewBox="0 0 24 26"><path d="M2 11c0 8 6 13 12 12 6-1 9-8 7-14C19 3 12 1 9 5c-2 3 0 8 4 8 3 0 4-4 1-5-1 4-7 0-3-3" fill="#d6301f" stroke="#d6301f" stroke-width="1"/><path d="M10 6c2-2 6-1 6 3s-5 5-7 2" fill="none" stroke="#f07d4f" stroke-width="1.5"/></svg>
<svg style="left:502px;top:1047px" width="24" height="26" viewBox="0 0 24 26"><path d="M2 3l8-3 4 4 8-2-1 18-6 6-13-3z" fill="#f2317f"/><path d="M14 4l8-2-1 18z" fill="#0d86f2"/><path d="M2 3l8-3 1 10-7 8z" fill="#fd8f18"/><rect x="4" y="4" width="16" height="18" fill="#111"/><text x="6" y="14" font-size="8" font-weight="bold" fill="#fff" font-family="Liberation Sans">IJ</text><rect x="6" y="17" width="7" height="1.5" fill="#fff"/></svg>
<svg style="left:551px;top:1047px" width="22" height="27" viewBox="0 0 22 27"><rect x="1" y="2" width="16" height="24" fill="#f6f6ee" stroke="#9a9a8c"/><rect x="1" y="17" width="16" height="9" fill="#73c93a"/><path d="M5 6v7M8 6v7M11 9h4" stroke="#333"/><path d="M15 14L21 1" stroke="#caa22b" stroke-width="2.5"/></svg>
<svg style="left:599px;top:1052px" width="24" height="17" viewBox="0 0 25 22" preserveAspectRatio="none"><path d="M0 3h7l2 2h10v16H0z" fill="#7fb23c"/><circle cx="10" cy="12" r="5" fill="#e6f2d0"/><path d="M9 8v8M12 8v8" stroke="#5f8e25" stroke-width="1.5"/><path d="M20 10h4l-3 8" fill="#9bbf5f"/></svg>
<svg style="left:648px;top:1047px" width="26" height="27" viewBox="0 0 26 27"><circle cx="8" cy="18" r="5.5" fill="none" stroke="#1a95d9" stroke-width="3.5" stroke-dasharray="2.500 1.200"/><circle cx="19" cy="7" r="4.3" fill="none" stroke="#1a95d9" stroke-width="3" stroke-dasharray="2.200 1"/></svg>
<svg style="left:698px;top:1051px" width="22" height="19" viewBox="0 0 23 23" preserveAspectRatio="none"><rect width="23" height="23" rx="1" fill="#0c0c0c" stroke="#8a8f92"/><rect x="1" y="1" width="21" height="3" fill="#9ea3a6"/><text x="2" y="12" font-size="7" fill="#ddd" font-family="Liberation Mono">C:\_</text></svg>
<svg style="left:747px;top:1047px" width="22" height="26" viewBox="0 0 22 26"><path d="M7 1h15l-3 19-15 5z" fill="#b6d9ea"/><path d="M7 1L0 20l4 5 3-24z" fill="#6fb3d4"/><path d="M9 6h9M8 10h9M7 14h9" stroke="#8fc0d8" stroke-width="1"/></svg>
<div class="u" style="left:249px;width:32px"></div><div class="u" style="left:281px;width:7px;background:#5b8fb8"></div><div class="u" style="left:392px;width:48px"></div><div class="u" style="left:445px;width:40px"></div><div class="u" style="left:494px;width:40px"></div><div class="u" style="left:543px;width:40px"></div><div class="u" style="left:592px;width:40px"></div><div class="u" style="left:641px;width:40px"></div><div class="u" style="left:690px;width:40px"></div><div class="u" style="left:739px;width:40px"></div>

<svg style="left:1326px;top:1047px" width="24" height="26" viewBox="0 0 24 26"><path d="M1 14h21c0 7-5 11-11 11-5 0-9-4-10-11z" fill="#f49a2c"/><path d="M14 14c2-1 5-3 6-6 2 3 2 8-2 11z" fill="#ffc65c"/><ellipse cx="7" cy="10" rx="6.5" ry="4.5" fill="#dfe8f0"/><circle cx="17" cy="6" r="6" fill="#cf3b2b"/><text x="15" y="9.5" font-size="9" fill="#fff" font-family="Liberation Sans">1</text></svg>
<svg style="left:1373px;top:1053px" width="15" height="15" viewBox="0 0 15 15"><rect x="3" y="1" width="11" height="11" rx="2" fill="none" stroke="#ddd" stroke-width="1.3"/><rect x="1" y="3" width="11" height="11" rx="2" fill="#21323c" stroke="#eee" stroke-width="1.3"/><circle cx="6.5" cy="8.5" r="2.5" fill="none" stroke="#eee"/></svg>
<svg style="left:1398px;top:1052px" width="14" height="16" viewBox="0 0 14 16"><circle cx="6" cy="8" r="5" fill="none" stroke="#2d9fd9" stroke-width="3"/><circle cx="12" cy="12" r="2" fill="#1a6fa8"/></svg>
<svg style="left:1422px;top:1053px" width="15" height="14" viewBox="0 0 15 14"><path d="M15 0L0 8l5 1.500L6 14l3-3 3 1z" fill="#1c8fe0"/><path d="M15 0L5 9.500 6 14z" fill="#12609c"/></svg>
<svg style="left:1445px;top:1052px" width="16" height="16" viewBox="0 0 16 16"><circle cx="8" cy="8" r="7.5" fill="#525c62" stroke="#8c8f90"/><path d="M8 8V14M8 8L3 5M8 8l5-3" stroke="#ddd" stroke-width="1.5"/></svg>
<svg style="left:1469px;top:1052px" width="17" height="16" viewBox="0 0 17 16"><ellipse cx="6" cy="6" rx="6" ry="5.5" fill="#3fd34b"/><ellipse cx="12" cy="10.5" rx="5" ry="4.5" fill="#eee"/></svg>
<svg style="left:1493px;top:1052px" width="16" height="16" viewBox="0 0 16 16"><circle cx="8" cy="8" r="8" fill="#16395c"/><circle cx="10.5" cy="6" r="2.5" fill="none" stroke="#fff" stroke-width="1.2"/><path d="M0 9l6 2.500" stroke="#fff" stroke-width="2"/></svg>
<svg style="left:1518px;top:1052px" width="15" height="16" viewBox="0 0 15 16"><path d="M7.500 0l7 4v8l-7 4-7-4V4z" fill="#ea3b8d"/><path d="M7.500 8l7-4v8l-7 4z" fill="#111"/></svg>
<svg style="left:1541px;top:1052px" width="16" height="16" viewBox="0 0 16 16"><circle cx="8" cy="8" r="6" fill="none" stroke="#f5b915" stroke-width="3.5"/><path d="M2 8a6 6 0 0 1 6-6" fill="none" stroke="#1f8be0" stroke-width="3.5"/><path d="M14 8a6 6 0 0 1-6 6" fill="none" stroke="#e83b35" stroke-width="3.5"/></svg>
<svg style="left:1565px;top:1052px" width="16" height="16" viewBox="0 0 16 16"><circle cx="10" cy="6" r="4.5" fill="none" stroke="#f2861e" stroke-width="2.2"/><path d="M6.500 9.500L1 15" stroke="#f2861e" stroke-width="2.5"/></svg>
<svg style="left:1589px;top:1054px" width="17" height="11" viewBox="0 0 17 11"><path d="M3.500 11a3.500 3.500 0 0 1-.5-7 5 5 0 0 1 9.500-1.500A4.300 4.300 0 0 1 13 11z" fill="#2396e4"/></svg>
<svg style="left:1613px;top:1054px" width="17" height="11" viewBox="0 0 17 11"><path d="M3.500 11a3.500 3.500 0 0 1-.5-7 5 5 0 0 1 9.500-1.500A4.300 4.300 0 0 1 13 11z" fill="#2396e4"/></svg>
<svg style="left:1637px;top:1054px" width="17" height="11" viewBox="0 0 17 11"><path d="M3.500 11a3.500 3.500 0 0 1-.5-7 5 5 0 0 1 9.500-1.500A4.300 4.300 0 0 1 13 11z" fill="#ddd"/></svg>
<svg style="left:1661px;top:1051px" width="17" height="18" viewBox="0 0 17 18"><path d="M7 0l6 2v6c0 4-3 6-6 7-3-1-6-3-6-7V2z" fill="#fff"/><path d="M7 0v7H1V2zM7 7h6v1c0 3-3 6-6 7z" fill="#111"/><circle cx="12" cy="13" r="4.5" fill="#0f7f3a"/><path d="M10 13l1.500 1.500 2.500-2.500" fill="none" stroke="#fff"/></svg>
<svg style="left:1685px;top:1052px" width="17" height="16" viewBox="0 0 17 16"><rect x="4.5" y=".5" width="12" height="10" fill="none" stroke="#fff"/><rect x=".5" y="3" width="5" height="6" fill="#21323c" stroke="#fff"/><path d="M3 9v6M0 15h12M10 11v4" stroke="#fff"/></svg>
<svg style="left:1708px;top:1052px" width="17" height="16" viewBox="0 0 17 16"><path d="M1 5.500h3L8 2v12L4 10.500H1z" fill="none" stroke="#fff"/><path d="M10.500 5a4 4 0 0 1 0 6M12.500 3a7 7 0 0 1 0 10M14.500 1a10 10 0 0 1 0 14" fill="none" stroke="#fff"/></svg>
<span class="t" style="left:1733px;top:1060px;font-size:14px;color:#fff">英</span>
<svg style="left:1761px;top:1051px" width="16" height="17" viewBox="0 0 16 17"><rect x="1" y="1" width="14" height="15" rx="3" fill="#e9401f" transform="rotate(-7 8 8)"/><text x="3.500" y="13.500" font-size="13" font-weight="bold" fill="#fff" font-family="Liberation Sans">S</text></svg>
<span class="t" style="left:1827px;top:1051px;transform:translate(-50%,-50%);font-size:13px;color:#fff">2:53</span>
<span class="t" style="left:1827px;top:1070px;transform:translate(-50%,-50%);font-size:13px;color:#fff">2023-12-24</span>
<svg style="left:1879px;top:1052px" width="17" height="17" viewBox="0 0 17 17"><path d="M.7.700h15.600v12.600h-4L8.500 16.500V13.300H.7z" fill="none" stroke="#fff" stroke-width="1.2"/></svg>
</body></html>
